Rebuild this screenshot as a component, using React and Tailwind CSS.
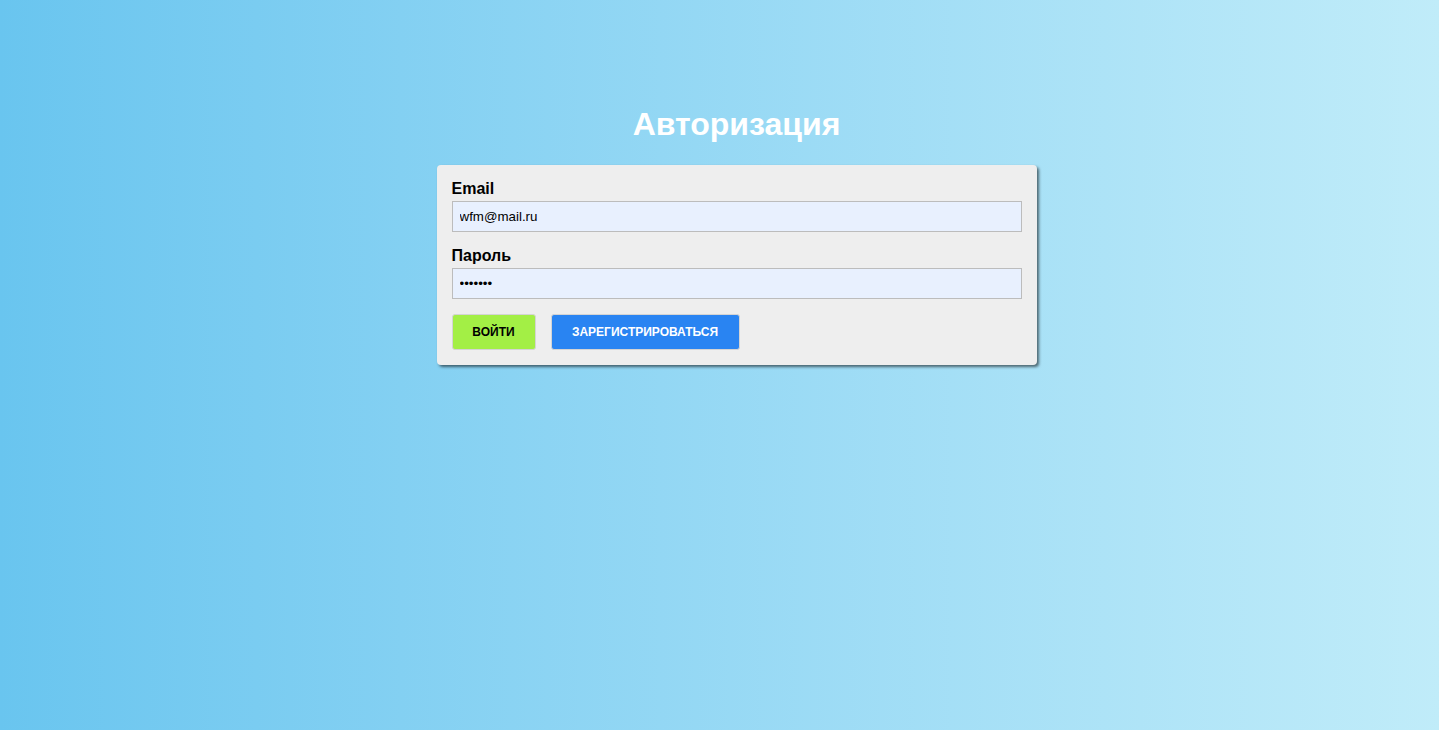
import { useState } from 'react'

export default function App() {
  const [email, setEmail] = useState('wfm@mail.ru')
  const [password, setPassword] = useState('1234567')

  return (
    <div className="min-h-screen w-full bg-linear-to-r from-[#69c5ef] to-[#c0ecf9] font-['Liberation_Sans',Arial,sans-serif] pt-[106px] pl-[34px]">
      <h1 className="text-center text-white font-bold text-[32px] leading-[36px] mb-[23px]">Авторизация</h1>

      <form onSubmit={e => e.preventDefault()}
        className="mx-auto w-[600px] bg-[#eeeeee] rounded-[4px] px-[15px] pt-[14px] pb-[15px] shadow-[2px_2px_3px_rgba(0,0,0,0.55)]">
        {/* Email */}
        <label className="block text-[16px] leading-[20px] font-bold text-black">Email</label>
        <input type="email" value={email} onChange={e => setEmail(e.target.value)}
          className="block w-full h-[31px] mt-[2px] px-[7px] bg-[#e8f0fe] border border-[#bcbcbc] text-[13.33px] text-black outline-none" />

        {/* Пароль */}
        <label className="block mt-[14px] text-[16px] leading-[20px] font-bold text-black">Пароль</label>
        <input type="password" value={password} onChange={e => setPassword(e.target.value)}
          className="block w-full h-[31px] mt-[2px] px-[7px] bg-[#e8f0fe] border border-[#bcbcbc] text-[13.33px] text-black outline-none" />

        <div className="flex gap-[15px] mt-[15px]">
          <button type="submit"
            className="h-[36px] w-[84px] rounded-[3px] border border-[#d4d4d4] bg-[#a3ef45] text-black text-[12px] font-bold uppercase">
            Войти
          </button>
          <button type="button"
            className="h-[36px] w-[189px] rounded-[3px] border border-[#d4d4d4] bg-[#2984f2] text-white text-[12px] font-bold uppercase">
            Зарегистрироваться
          </button>
        </div>
      </form>
    </div>
  )
}
